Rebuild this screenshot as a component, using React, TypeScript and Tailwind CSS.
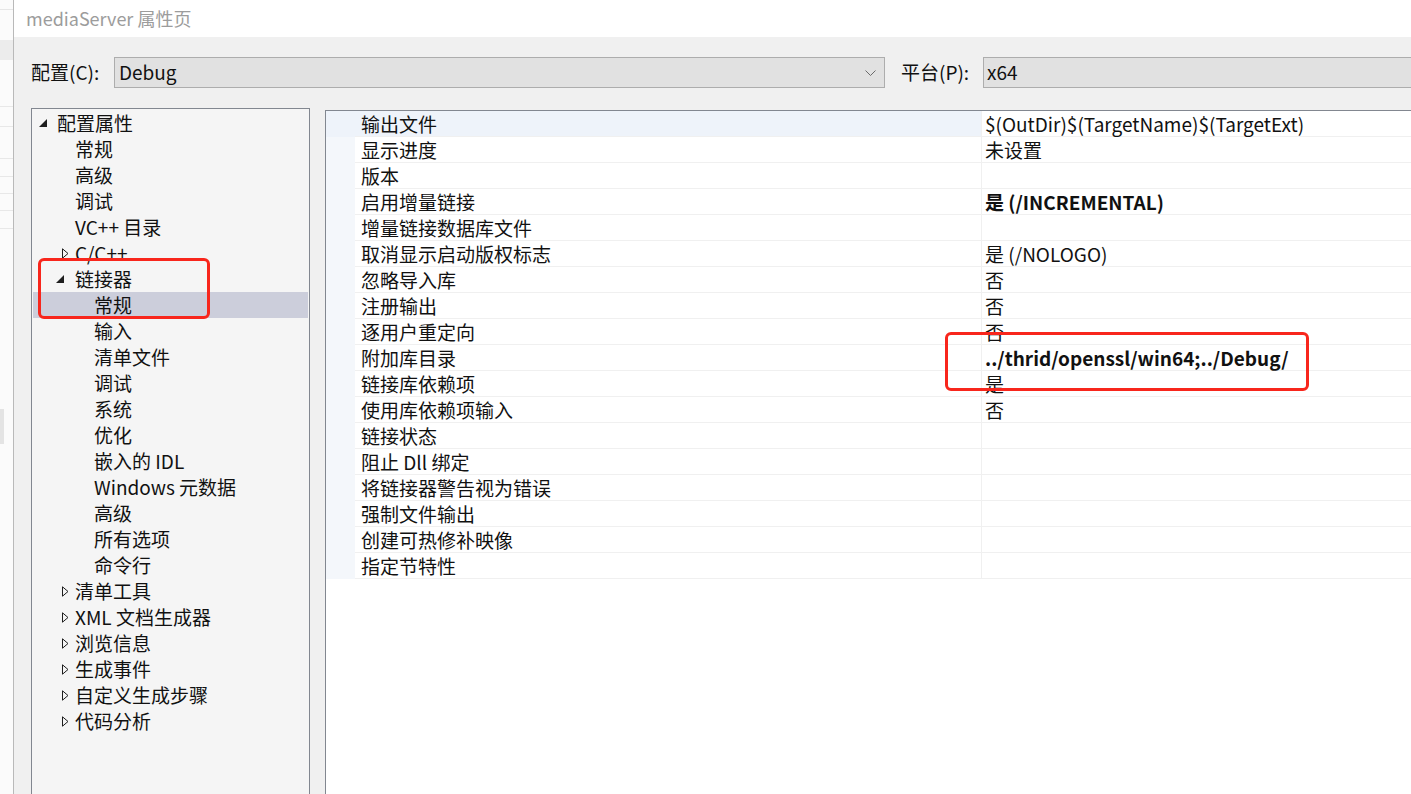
import React from 'react'

type TreeRow = {
    label: string
    level: number
    expander?: 'open' | 'closed'
    selected?: boolean
}

const treeRows: TreeRow[] = [
    { label: '配置属性', level: 0, expander: 'open' },
    { label: '常规', level: 1 },
    { label: '高级', level: 1 },
    { label: '调试', level: 1 },
    { label: 'VC++ 目录', level: 1 },
    { label: 'C/C++', level: 1, expander: 'closed' },
    { label: '链接器', level: 1, expander: 'open' },
    { label: '常规', level: 2, selected: true },
    { label: '输入', level: 2 },
    { label: '清单文件', level: 2 },
    { label: '调试', level: 2 },
    { label: '系统', level: 2 },
    { label: '优化', level: 2 },
    { label: '嵌入的 IDL', level: 2 },
    { label: 'Windows 元数据', level: 2 },
    { label: '高级', level: 2 },
    { label: '所有选项', level: 2 },
    { label: '命令行', level: 2 },
    { label: '清单工具', level: 1, expander: 'closed' },
    { label: 'XML 文档生成器', level: 1, expander: 'closed' },
    { label: '浏览信息', level: 1, expander: 'closed' },
    { label: '生成事件', level: 1, expander: 'closed' },
    { label: '自定义生成步骤', level: 1, expander: 'closed' },
    { label: '代码分析', level: 1, expander: 'closed' },
]

type PropRow = { name: string; value: string; bold?: boolean }

const propRows: PropRow[] = [
    { name: '输出文件', value: '$(OutDir)$(TargetName)$(TargetExt)' },
    { name: '显示进度', value: '未设置' },
    { name: '版本', value: '' },
    { name: '启用增量链接', value: '是 (/INCREMENTAL)', bold: true },
    { name: '增量链接数据库文件', value: '' },
    { name: '取消显示启动版权标志', value: '是 (/NOLOGO)' },
    { name: '忽略导入库', value: '否' },
    { name: '注册输出', value: '否' },
    { name: '逐用户重定向', value: '否' },
    { name: '附加库目录', value: '../thrid/openssl/win64;../Debug/', bold: true },
    { name: '链接库依赖项', value: '是' },
    { name: '使用库依赖项输入', value: '否' },
    { name: '链接状态', value: '' },
    { name: '阻止 Dll 绑定', value: '' },
    { name: '将链接器警告视为错误', value: '' },
    { name: '强制文件输出', value: '' },
    { name: '创建可热修补映像', value: '' },
    { name: '指定节特性', value: '' },
]

const indents = ['pl-[5px]', 'pl-[23px]', 'pl-[42px]']

function Expander({ kind, level }: { kind?: 'open' | 'closed'; level: number }) {
    return (
        <div className="relative h-[26px] w-[19px] shrink-0">
            {kind === 'open' && (
                <svg
                    className={`absolute top-[9px] ${level === 0 ? 'left-[1px]' : 'left-0'}`}
                    width="8"
                    height="8"
                    viewBox="0 0 8 8"
                >
                    <polygon points="8,0 8,8 0,8" fill="#1e1e1e" />
                </svg>
            )}
            {kind === 'closed' && (
                <svg className="absolute left-[6px] top-[8px]" width="7" height="11" viewBox="0 0 7 11">
                    <path d="M0.5 0.8 L6 5.5 L0.5 10.2 Z" fill="none" stroke="#1e1e1e" strokeWidth="1" />
                </svg>
            )}
        </div>
    )
}

export default function App() {
    return (
        <div className="relative flex h-[794px] w-[1411px] overflow-hidden bg-white font-['Noto_Sans_CJK_SC','Noto_Sans',sans-serif] text-[19px] text-[#111]">
            {/* window behind the dialog */}
            <div className="flex w-[13px] shrink-0 flex-col bg-[#fbfbfb]">
                <div className="h-[10px] border-b border-[#e6e6e6]" />
                <div className="mt-[30px] h-[20px] bg-[#ececec]" />
                <div className="mt-[14px] h-[33px] border-b border-[#e8e8e8]" />
                <div className="h-[20px] border-b border-[#e8e8e8]" />
                <div className="h-[32px] border-b border-[#e8e8e8]" />
                <div className="h-[18px] border-b border-[#e8e8e8]" />
                <div className="h-[17px] border-b border-[#e8e8e8]" />
                <div className="h-[17px] border-b border-[#e8e8e8]" />
                <div className="h-[18px] border-b border-[#e8e8e8]" />
                <div className="mt-[180px] h-[35px] w-[4px] bg-[#e4e4e4]" />
            </div>

            {/* dialog */}
            <div className="flex flex-1 flex-col border-l border-[#b9b9b9] bg-[#f0f0f0]">
                <div className="flex h-[37px] shrink-0 items-center bg-white pl-[12px] text-[18px] text-[#9c9c9c]">
                    mediaServer 属性页
                </div>

                {/* configuration row */}
                <div className="mt-[20px] flex h-[31px] shrink-0 items-center pl-[17px]">
                    <div className="w-[83px] shrink-0">配置(C):</div>
                    <div className="relative flex h-[31px] w-[771px] shrink-0 items-center border border-[#adadad] bg-[#e1e1e1] pl-[4px]">
                        Debug
                        <svg className="absolute right-[8px] top-[12px]" width="11" height="7" viewBox="0 0 11 7">
                            <polyline points="0.5,0.5 5.5,5.5 10.5,0.5" fill="none" stroke="#6a6a6a" strokeWidth="1" />
                        </svg>
                    </div>
                    <div className="ml-[16px] w-[82px] shrink-0">平台(P):</div>
                    <div className="flex h-[31px] w-[520px] shrink-0 items-center border border-[#adadad] bg-[#e1e1e1] pl-[3px]">
                        x64
                    </div>
                </div>

                {/* panels */}
                <div className="mt-[20px] flex flex-1 pl-[17px]">
                    {/* tree */}
                    <div className="w-[279px] shrink-0 border-l border-r border-t border-[#828790] bg-[#f5f5f5] px-[1px] pt-[1px]">
                        {treeRows.map((row, i) => (
                            <div
                                key={i}
                                className={`flex h-[26px] items-center leading-[26px] ${indents[row.level]} ${row.selected ? 'bg-[#cccedb]' : ''}`}
                            >
                                <Expander kind={row.expander} level={row.level} />
                                <span className="whitespace-nowrap">{row.label}</span>
                            </div>
                        ))}
                    </div>

                    {/* property grid */}
                    <div className="ml-[15px] mt-[2px] flex-1 overflow-hidden border-l border-t border-[#828790] bg-white">
                        {propRows.map((row, i) => (
                            <div key={i} className="flex h-[26px] leading-[25px]">
                                <div className={`w-[29px] shrink-0 ${i === 0 ? 'bg-[#eef3fa]' : 'bg-[#f4f7fb]'}`} />
                                <div
                                    className={`w-[627px] shrink-0 border-b border-r border-[#f0f0f0] pl-[6px] whitespace-nowrap ${i === 0 ? 'bg-[#eef3fa]' : ''}`}
                                >
                                    {row.name}
                                </div>
                                <div
                                    className={`flex-1 border-b border-[#f0f0f0] pl-[3px] whitespace-nowrap ${row.bold ? 'font-bold' : ''}`}
                                >
                                    {row.value}
                                </div>
                            </div>
                        ))}
                    </div>
                </div>
            </div>

            {/* red annotation boxes */}
            <div className="pointer-events-none absolute left-[38px] top-[258px] h-[61px] w-[172px] rounded-[6px] border-[3px] border-[#f8261c]" />
            <div className="pointer-events-none absolute left-[945px] top-[332px] h-[59px] w-[364px] rounded-[6px] border-[3px] border-[#f8261c]" />
        </div>
    )
}
